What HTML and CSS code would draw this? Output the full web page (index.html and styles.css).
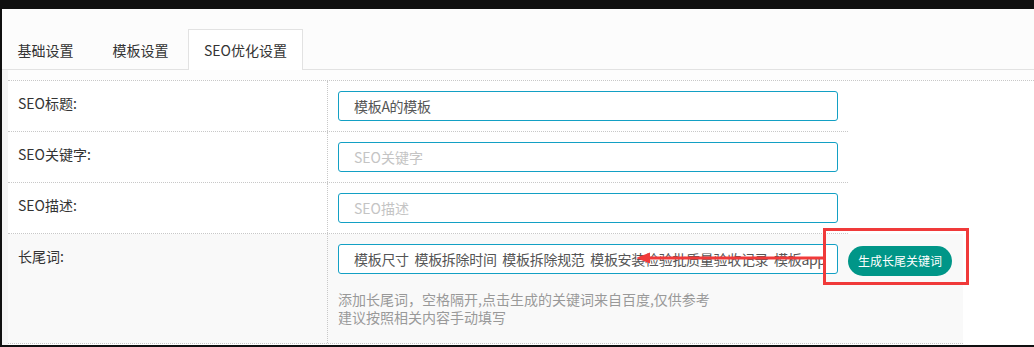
FILE: index.html
```html
<!DOCTYPE html>
<html>

<head>
    <meta charset="utf-8">
    <title>SEO优化设置</title>
    <link rel="stylesheet" href="styles.css">
</head>

<body>
    <div class="page">
        <ul class="tabs">
            <li>基础设置</li>
            <li>模板设置</li>
            <li class="active">SEO优化设置</li>
        </ul>
        <div class="form">
            <div class="table">
                <div class="row">
                    <div class="label">SEO标题:</div>
                    <div class="field">
                        <input type="text" value="模板A的模板">
                    </div>
                </div>
                <div class="row">
                    <div class="label">SEO关键字:</div>
                    <div class="field">
                        <input type="text" placeholder="SEO关键字">
                    </div>
                </div>
                <div class="row">
                    <div class="label">SEO描述:</div>
                    <div class="field">
                        <input type="text" placeholder="SEO描述">
                    </div>
                </div>
                <div class="row long">
                    <div class="label">长尾词:</div>
                    <div class="field">
                        <div class="line">
                            <input type="text" value="模板尺寸  模板拆除时间  模板拆除规范  模板安装检验批质量验收记录  模板app">
                            <a class="btn">生成长尾关键词</a>
                        </div>
                        <p class="tip">添加长尾词，空格隔开,点击生成的关键词来自百度,仅供参考<br>建议按照相关内容手动填写</p>
                    </div>
                </div>
            </div>
        </div>
    </div>
    <!-- 标注 -->
    <div class="mark"></div>
    <svg class="arrow" width="190" height="14" viewBox="0 0 190 14">
        <line x1="10" y1="7" x2="190" y2="7" stroke="#f03a3a" stroke-width="3" />
        <polygon points="0,7 14,1.5 14,12.5" fill="#f03a3a" />
    </svg>
</body>

</html>
```

FILE: styles.css
```css
body {
    margin: 0;
    padding: 9px 0 2px 2px;
    background: #101010;
    font-family: "Noto Sans CJK SC", "Liberation Sans", sans-serif;
    font-size: 14px;
    color: #333;
}

.page {
    height: 336px;
    background: #f4f4f4;
    overflow: hidden;
}

.tabs {
    margin: 0;
    padding: 20px 0 0 0;
    height: 40px;
    list-style: none;
    display: flex;
    background: #fcfcfc;
    border-bottom: 1px solid #e2e2e2;
}

.tabs li {
    box-sizing: border-box;
    min-width: 95px;
    height: 41px;
    line-height: 40px;
    padding: 0 15px;
    text-align: center;
    border: 1px solid transparent;
    border-bottom: none;
}

.tabs li:first-child {
    margin-left: -4px;
}

.tabs li.active {
    background: #fff;
    border-color: #e2e2e2;
}

.form {
    margin-left: 6px;
    padding-top: 10px;
    height: 275px;
    background: #fdfdfd;
}

.table {
    height: 264px;
    border-top: 1px dotted #c8c8c8;
    background: #fff;
}

.row {
    display: flex;
    width: 840px;
    border-bottom: 1px dotted #c8c8c8;
}

.row .label {
    box-sizing: border-box;
    width: 320px;
    padding: 13px 10px 0;
    line-height: 18px;
    border-right: 1px dotted #c8c8c8;
}

.row .field {
    padding: 10px 9px 10px 10px;
}

.row input {
    box-sizing: border-box;
    display: block;
    width: 500px;
    height: 30px;
    padding: 0 10px 0 15px;
    border: 1px solid #13a0c4;
    border-radius: 3px;
    font-family: "Noto Sans CJK SC", "Liberation Sans", sans-serif;
    font-size: 14px;
    letter-spacing: -0.3px;
    color: #555;
    background: #fff;
    outline: none;
}

.row input::placeholder {
    color: #c4c4c4;
    letter-spacing: 0;
}

.row.long {
    width: 955px;
    height: 109px;
    background: #f9f9f9;
}

.row.long .field {
    padding-right: 10px;
}

.line {
    display: flex;
    align-items: flex-start;
}

.btn {
    margin: 2px 0 0 10px;
    height: 30px;
    line-height: 30px;
    padding: 0 10px;
    border-radius: 100px;
    background: #009688;
    color: #fff;
    font-size: 12px;
    white-space: nowrap;
    cursor: pointer;
}

.tip {
    margin: 14px 0 0;
    line-height: 18px;
    color: #999;
}

.mark {
    position: absolute;
    left: 823px;
    top: 228px;
    width: 140px;
    height: 51px;
    border: 3px solid #f03a3a;
}

.arrow {
    position: absolute;
    left: 636px;
    top: 251px;
}
```
